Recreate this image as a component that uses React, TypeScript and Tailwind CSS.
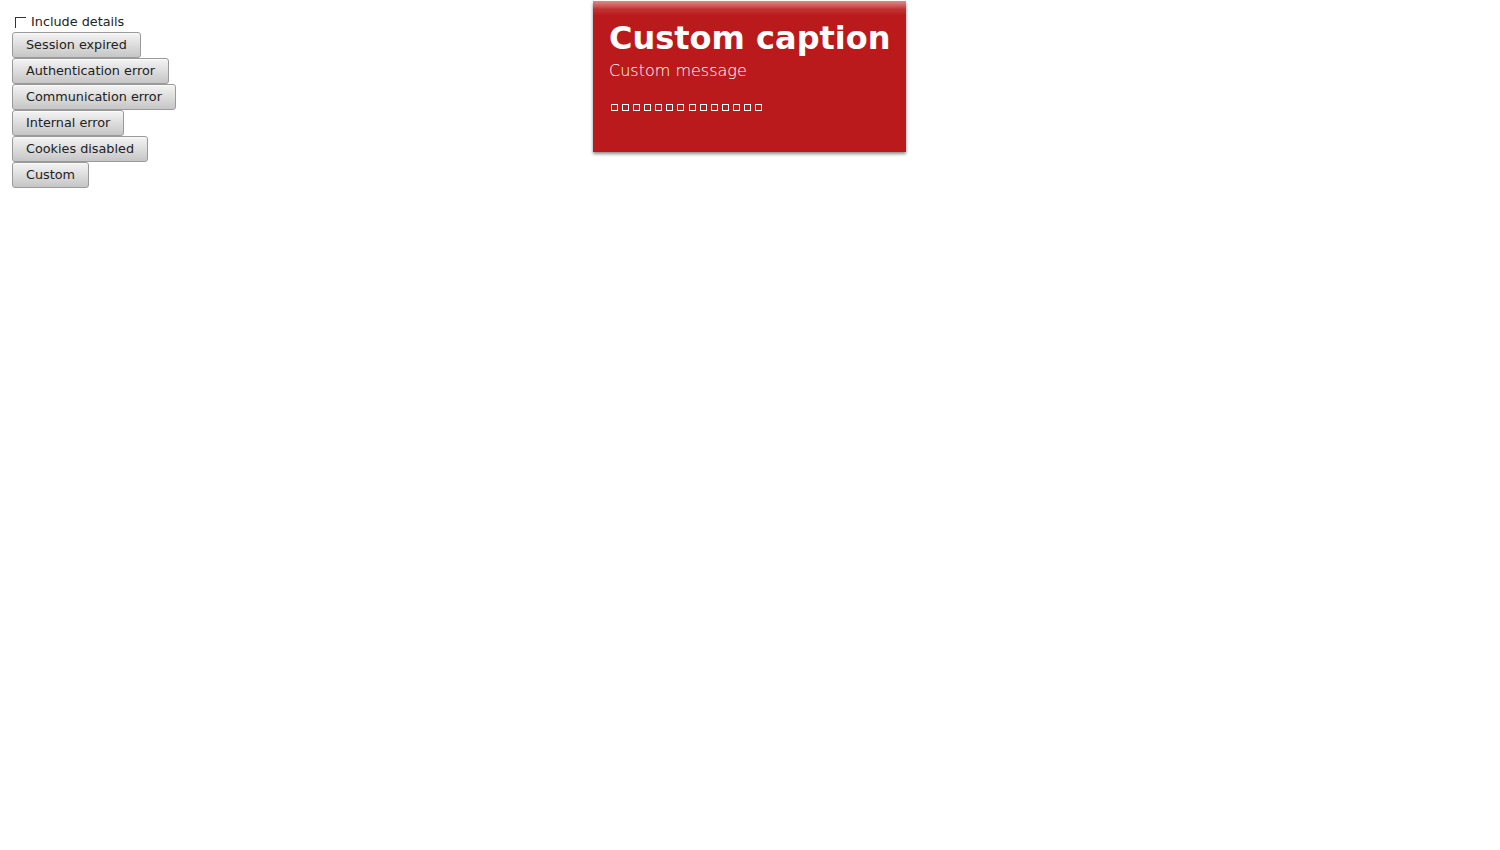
import React from "react";

const labels = [
  "Session expired",
  "Authentication error",
  "Communication error",
  "Internal error",
  "Cookies disabled",
  "Custom",
];

export default function App() {
  return (
    <div className="relative min-h-[850px] w-full bg-white font-['DejaVu_Sans',sans-serif] text-[#222]">
      <div className="flex flex-col items-start pl-3 pt-[13px]">
        <label className="flex h-[19px] items-center pl-[3px] text-[12.8px] leading-none">
          <span className="mr-[5px] h-[11px] w-[11px] border-l border-t border-[#333] bg-white" />
          Include details
        </label>
        {labels.map((l) => (
          <button
            key={l}
            className="h-[26px] whitespace-nowrap rounded-[3px] border border-[#9a9a9a] bg-gradient-to-b from-[#f4f4f4] to-[#c6c6c6] px-[13px] text-[12.8px] leading-none text-[#222] shadow-[inset_0_1px_0_rgba(255,255,255,0.6)]"
          >
            {l}
          </button>
        ))}
      </div>

      <div className="absolute left-[593px] top-[1px] w-[313px] bg-[#bb1a1c] shadow-[0_2px_3px_rgba(0,0,0,0.45)]">
        <div className="h-[16px] bg-gradient-to-b from-[#d98a8b] via-[#c23334] via-50% to-[#bb1a1c] to-90%" />
        <div className="-mt-[16px] pb-[40px] pl-4 pt-[20px] text-white">
          <div className="whitespace-nowrap text-[32px] font-bold leading-[34px]">Custom caption</div>
          <div className="mt-[6px] text-[16px] font-extralight leading-[20px] text-white">Custom message</div>
          <div className="mt-[21px] flex h-[10px] items-center pl-[2px]">
            {Array.from({ length: 14 }).map((_, i) => (
              <span key={i} className="mr-[4.08px] h-[7px] w-[7px] border border-white" />
            ))}
          </div>
        </div>
      </div>
    </div>
  );
}
